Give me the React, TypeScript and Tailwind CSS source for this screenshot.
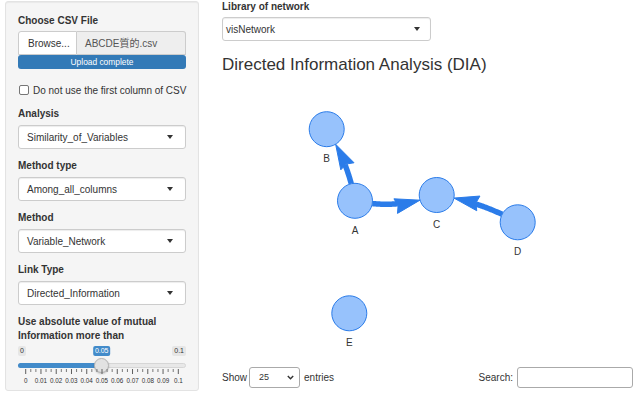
import React from "react";

type Pt = [number, number];

const R = 17.5;
const L = 25;

const nodes: Record<string, Pt> = {
  A: [355, 200.8],
  B: [326.7, 129.2],
  C: [436.7, 195],
  D: [517.7, 222.3],
  E: [349.3, 313.3],
};

function dist(a: Pt, b: Pt) {
  return Math.hypot(a[0] - b[0], a[1] - b[1]);
}

function edgeGeom(s: Pt, t: Pt, bow: number) {
  const [sx, sy] = s;
  const [tx, ty] = t;
  const dx = tx - sx;
  const dy = ty - sy;
  const len = Math.hypot(dx, dy);
  const ux = dx / len;
  const uy = dy / len;
  const px = -uy;
  const py = ux;
  const cx = (sx + tx) / 2 + 2 * bow * px;
  const cy = (sy + ty) / 2 + 2 * bow * py;
  const P = (k: number): Pt => [
    (1 - k) * (1 - k) * sx + 2 * (1 - k) * k * cx + k * k * tx,
    (1 - k) * (1 - k) * sy + 2 * (1 - k) * k * cy + k * k * ty,
  ];
  let lo = 0.5;
  let hi = 1;
  for (let i = 0; i < 40; i++) {
    const m = (lo + hi) / 2;
    if (dist(P(m), t) > R) lo = m;
    else hi = m;
  }
  const kTip = lo;
  const tip = P(kTip);
  let ax = 2 * (1 - kTip) * (cx - sx) + 2 * kTip * (tx - cx);
  let ay = 2 * (1 - kTip) * (cy - sy) + 2 * kTip * (ty - cy);
  const al = Math.hypot(ax, ay);
  ax /= al;
  ay /= al;
  const nx = -ay;
  const ny = ax;
  const back: Pt = [tip[0] - L * ax, tip[1] - L * ay];
  const indent: Pt = [tip[0] - 0.9 * L * ax, tip[1] - 0.9 * L * ay];
  const w1: Pt = [back[0] + 0.3 * L * nx, back[1] + 0.3 * L * ny];
  const w2: Pt = [back[0] - 0.3 * L * nx, back[1] - 0.3 * L * ny];
  lo = 0;
  hi = 0.5;
  for (let i = 0; i < 40; i++) {
    const m = (lo + hi) / 2;
    if (dist(P(m), s) < R) lo = m;
    else hi = m;
  }
  const kStart = hi;
  lo = kStart;
  hi = kTip;
  for (let i = 0; i < 40; i++) {
    const m = (lo + hi) / 2;
    if (dist(P(m), tip) > 0.9 * L) lo = m;
    else hi = m;
  }
  const kEnd = lo;
  const pts: string[] = [];
  for (let i = 0; i <= 24; i++) {
    const k = kStart + ((kEnd - kStart) * i) / 24;
    const p = P(k);
    pts.push(`${p[0].toFixed(2)},${p[1].toFixed(2)}`);
  }
  const arrow = [tip, w1, indent, w2]
    .map((p) => `${p[0].toFixed(2)},${p[1].toFixed(2)}`)
    .join(" ");
  return { line: pts.join(" "), arrow };
}

const edges = [
  edgeGeom(nodes.A, nodes.B, 4),
  edgeGeom(nodes.A, nodes.C, 6),
  edgeGeom(nodes.D, nodes.C, 4),
];

function Caret() {
  return (
    <span className="block w-0 h-0 border-l-[3.5px] border-r-[3.5px] border-t-[4px] border-l-transparent border-r-transparent border-t-[#333]" />
  );
}

function SideSelect({ label, value }: { label: string; value: string }) {
  return (
    <div className="mt-[10px] flex flex-col">
      <div className="text-[10px] leading-[14px] font-bold text-[#333]">{label}</div>
      <div className="mt-[4px] h-[24px] bg-white border border-[#ccc] rounded-[3px] shadow-[inset_0_1px_1px_rgba(0,0,0,0.075)] flex items-center justify-between pl-[8px] pr-[12px]">
        <span className="text-[10px] text-[#333]">{value}</span>
        <Caret />
      </div>
    </div>
  );
}

const tickVals = ["0", "0.01", "0.02", "0.03", "0.04", "0.05", "0.06", "0.07", "0.08", "0.09", "0.1"];
const X0 = 7.7;
const STEP = 15.26;

function Slider() {
  const ticks: React.ReactElement[] = [];
  for (let i = 0; i <= 10; i++) {
    const x = X0 + i * STEP;
    ticks.push(<rect key={`M${i}`} x={x - 0.5} y={0} width={1} height={5} fill="#5f5f5f" />);
    if (i > 0) {
      for (let z = 1; z <= 2; z++) {
        const sx = x - (STEP / 3) * z;
        ticks.push(<rect key={`m${i}-${z}`} x={sx - 0.5} y={0} width={1} height={3} fill="#7a7a7a" />);
      }
    }
  }
  return (
    <div className="relative w-[168px] h-[45px]">
      <div className="absolute left-0 top-[3px] h-[10px] px-[2px] rounded-[2px] bg-[#e6e6e6] text-[7px] leading-[10px] text-[#333]">0</div>
      <div className="absolute right-0 top-[3px] h-[10px] px-[2px] rounded-[2px] bg-[#e6e6e6] text-[7px] leading-[10px] text-[#333]">0.1</div>
      <div className="absolute left-[83.7px] -translate-x-1/2 top-[3px] h-[10px] px-[2px] rounded-[2px] bg-[#428bca] text-[7px] leading-[10px] text-white">0.05</div>
      <div className="absolute left-0 right-0 top-[20px] h-[5px] rounded-full bg-[#e8e8e8] border border-[#d6d6d6]" />
      <div className="absolute left-0 top-[20px] w-[84px] h-[5px] rounded-l-full bg-[#428bca]" />
      <div className="absolute left-[76px] top-[15px] w-[15px] h-[15px] rounded-full bg-[#e2e2e2] border border-[#b3b3b3] shadow-[0_1px_2px_rgba(0,0,0,0.2)]" />
      <svg className="absolute left-0 top-[26px]" width={168} height={6}>
        {ticks}
      </svg>
      {tickVals.map((v, i) => (
        <span
          key={v}
          className="absolute top-[34px] -translate-x-1/2 text-[6.3px] leading-[8px] text-[#333] whitespace-nowrap"
          style={{ left: X0 + i * STEP }}
        >
          {v}
        </span>
      ))}
    </div>
  );
}

export default function App() {
  return (
    <div className="w-[635px] h-[393px] overflow-hidden bg-white flex pl-[5px] font-['Liberation_Sans','Noto_Sans_CJK_JP',Arial,sans-serif] text-[#333]">
      <aside className="mt-[1px] w-[194px] h-[390px] shrink-0 bg-[#f5f5f5] border border-[#e3e3e3] rounded-[3px] shadow-[inset_0_1px_1px_rgba(0,0,0,0.05)] px-[12px] pt-[12px] flex flex-col">
        <div className="text-[10px] leading-[14px] font-bold mb-[3px]">Choose CSV File</div>
        <div className="flex h-[24px]">
          <div className="w-[59px] bg-white border border-[#ccc] rounded-tl-[3px] flex items-center pl-[9px] text-[10px] text-[#333]">Browse...</div>
          <div className="flex-1 bg-[#eee] border border-l-0 border-[#ccc] rounded-tr-[3px] flex items-center pl-[8px] text-[10px] text-[#555]">ABCDE質的.csv</div>
        </div>
        <div className="h-[14px] bg-[#337ab7] rounded-[3px] text-white text-[8.4px] leading-[14px] text-center">Upload complete</div>
        <div className="mt-[14px] h-[14px] flex items-center whitespace-nowrap">
          <span className="ml-[1px] w-[10px] h-[10px] shrink-0 bg-white border border-[#767676] rounded-[2px]" />
          <span className="ml-[4px] text-[10px] text-[#333]">Do not use the first column of CSV</span>
        </div>
        <SideSelect label="Analysis" value="Similarity_of_Variables" />
        <SideSelect label="Method type" value="Among_all_columns" />
        <SideSelect label="Method" value="Variable_Network" />
        <SideSelect label="Link Type" value="Directed_Information" />
        <div className="mt-[10px] text-[10px] leading-[14px] font-bold">Use absolute value of mutual Information more than</div>
        <Slider />
      </aside>
      <main className="ml-[23px] w-[411px] flex flex-col">
        <div className="text-[10px] leading-[14px] font-bold">Library of network</div>
        <div className="mt-[3px] w-[209px] h-[24px] bg-white border border-[#ccc] rounded-[3px] shadow-[inset_0_1px_1px_rgba(0,0,0,0.075)] flex items-center justify-between pl-[3px] pr-[10px]">
          <span className="text-[10px]">visNetwork</span>
          <Caret />
        </div>
        <h3 className="mt-[14px] text-[17px] leading-[19px] text-[#333]">Directed Information Analysis (DIA)</h3>
        <svg width={411} height={292} viewBox="222 74 411 292" className="block">
          {edges.map((e, i) => (
            <g key={i}>
              <polyline points={e.line} fill="none" stroke="#2b7ce9" strokeWidth={5.5} strokeLinecap="butt" />
              <polygon points={e.arrow} fill="#2b7ce9" stroke="#2b7ce9" strokeWidth={1} strokeLinejoin="round" />
            </g>
          ))}
          {Object.entries(nodes).map(([k, [x, y]]) => (
            <g key={k}>
              <circle cx={x} cy={y} r={R} fill="#97c2fc" stroke="#2b7ce9" strokeWidth={1} />
              <text
                x={x}
                y={y + 33}
                textAnchor="middle"
                fontSize={10}
                fill="#343434"
                fontFamily="'Liberation Sans', Arial, sans-serif"
              >
                {k}
              </text>
            </g>
          ))}
        </svg>
        <div className="h-[23px] flex items-center justify-between">
          <div className="flex items-center text-[10px]">
            <span>Show</span>
            <div className="ml-[2px] w-[51px] h-[21px] border border-[#aaa] rounded-[3px] bg-white flex items-center justify-between pl-[9px] pr-[5px]">
              <span className="text-[9px]">25</span>
              <svg width={7} height={5} viewBox="0 0 7 5">
                <path d="M0.8 1 L3.5 3.8 L6.2 1" fill="none" stroke="#333" strokeWidth={1.4} />
              </svg>
            </div>
            <span className="ml-[4px]">entries</span>
          </div>
          <div className="flex items-center text-[10px]">
            <span>Search:</span>
            <div className="ml-[4px] w-[116px] h-[21px] border border-[#aaa] rounded-[3px] bg-white" />
          </div>
        </div>
      </main>
    </div>
  );
}
